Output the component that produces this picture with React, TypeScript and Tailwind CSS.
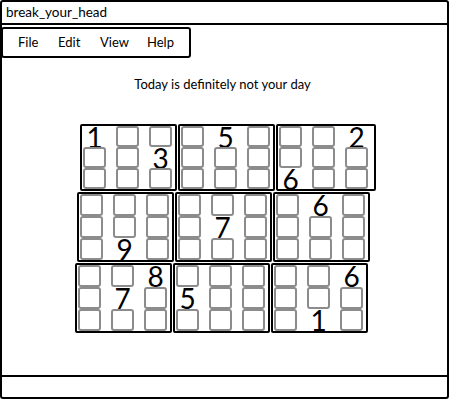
const boxes: string[][][] = [
  // row 1
  [
    ['1', '', ''],
    ['', '', '3'],
    ['', '', ''],
  ],
  [
    ['', '5', ''],
    ['', '', ''],
    ['', '', ''],
  ],
  [
    ['', '', '2'],
    ['', '', ''],
    ['6', '', ''],
  ],
  // row 2
  [
    ['', '', ''],
    ['', '', ''],
    ['', '9', ''],
  ],
  [
    ['', '', ''],
    ['', '7', ''],
    ['', '', ''],
  ],
  [
    ['', '6', ''],
    ['', '', ''],
    ['', '', ''],
  ],
  // row 3
  [
    ['', '', '8'],
    ['', '7', ''],
    ['', '', ''],
  ],
  [
    ['', '', ''],
    ['5', '', ''],
    ['', '', ''],
  ],
  [
    ['', '', '6'],
    ['', '', ''],
    ['', '1', ''],
  ],
];

function Box({ cells, tall, wide }: { cells: string[][]; tall?: boolean; wide?: boolean }) {
  const h = tall ? 'h-[22px]' : 'h-[21px]';
  return (
    <div
      className={`${wide ? 'w-[100px]' : 'w-[97px]'} border-2 border-black rounded-[2px] grid grid-cols-[23px_23px_23px] gap-x-[10px] pl-[1px]`}
    >
      {cells.flat().map((v, i) =>
        v ? (
          <div key={i} className={`${h} flex items-center justify-center text-[28px] leading-none text-black`}>
            {v}
          </div>
        ) : (
          <div key={i} className={`${h} border-2 border-[#8c8c8c] rounded-[3px]`} />
        )
      )}
    </div>
  );
}

export default function App() {
  return (
    <div className="w-[450px] h-[400px] bg-white text-black" style={{ fontFamily: 'Lato, "Open Sans", sans-serif' }}>
      <div className="w-[449px] h-[399px] border-2 border-black rounded-[3px] flex flex-col">
        {/* Title bar */}
        <div className="h-[23px] border-b-2 border-black pl-[4px] text-[13.5px] leading-[21px]">break_your_head</div>

        {/* Menu */}
        <div className="mt-[2px] -ml-[1px] w-[190px] h-[31px] border-2 border-black rounded-[3px] flex items-center pl-[15px] text-[13px]">
          <span className="w-[40px]">File</span>
          <span className="w-[42px]">Edit</span>
          <span className="w-[47px]">View</span>
          <span>Help</span>
        </div>

        <div className="mt-[19px] text-center text-[13px] leading-[14px] pr-[4px]">Today is definitely not your day</div>

        {/* Board */}
        <div className="mt-[33px] flex flex-col gap-[1px]">
          <div className="flex gap-[1px] ml-[78px]">
            <Box cells={boxes[0]} />
            <Box cells={boxes[1]} />
            <Box cells={boxes[2]} wide />
          </div>
          <div className="flex gap-[1px] ml-[75px]">
            <Box cells={boxes[3]} tall />
            <Box cells={boxes[4]} tall />
            <Box cells={boxes[5]} tall />
          </div>
          <div className="flex gap-[1px] ml-[73px]">
            <Box cells={boxes[6]} tall />
            <Box cells={boxes[7]} tall />
            <Box cells={boxes[8]} tall />
          </div>
        </div>

        <div className="flex-1" />
        {/* Status bar */}
        <div className="h-[22px] border-t-2 border-black" />
      </div>
    </div>
  );
}
